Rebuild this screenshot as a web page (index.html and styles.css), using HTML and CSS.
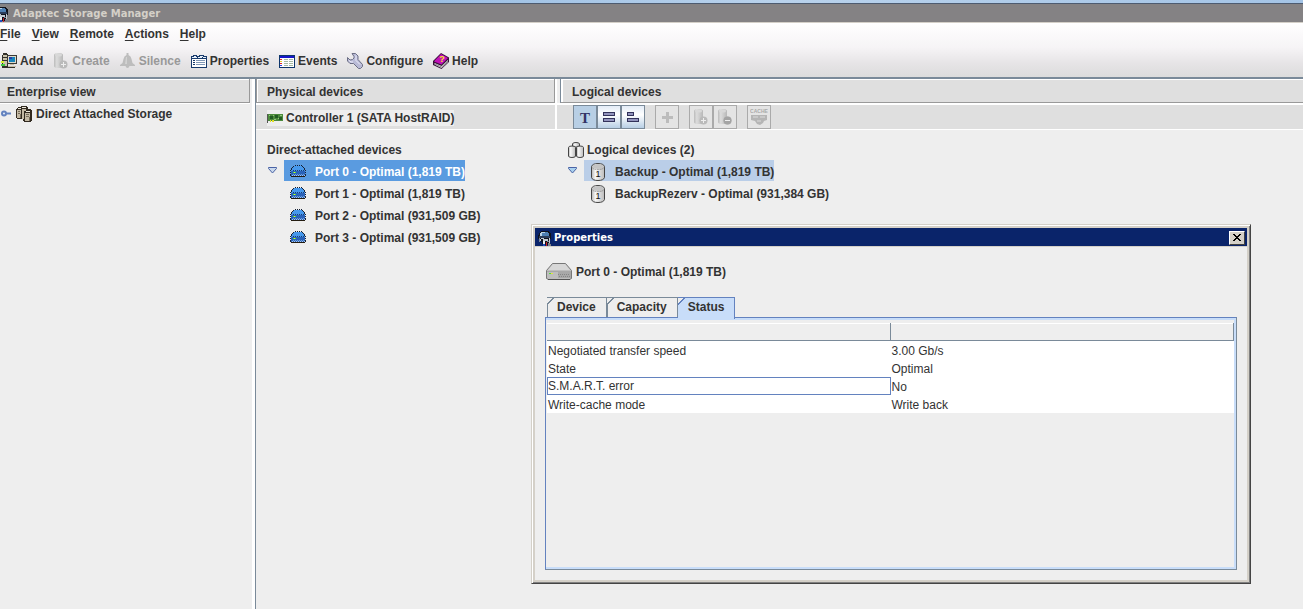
FILE: index.html
```
<!DOCTYPE html>
<html lang="en">
<head>
    <meta charset="UTF-8">
    <meta name="viewport" content="width=device-width, initial-scale=1.0">
    <title>Adaptec Storage Manager</title>
    <link rel="stylesheet" href="styles.css">
</head>
<body>
    <svg class="sprite" aria-hidden="true">
        <defs>
            <linearGradient id="steel" x1="0" x2="1" y1="0" y2="0">
                <stop offset="0" stop-color="#b5b5b5"/>
                <stop offset=".3" stop-color="#f8f8f8"/>
                <stop offset="1" stop-color="#bbb"/>
            </linearGradient>
            <linearGradient id="grayed" x1="0" x2="1" y1="0" y2="0">
                <stop offset="0" stop-color="#bbb"/>
                <stop offset=".3" stop-color="#dcdcdc"/>
                <stop offset="1" stop-color="#b8b8b8"/>
            </linearGradient>
        </defs>
        <symbol id="app" viewBox="0 0 16 16">
            <path fill="#10131c" d="M4 1h7l3 2v5l-1 1v6H6L5 12 2 10 1 7l1-4z"/>
            <path fill="#4d7fb3" d="M4 2h7l1 2v2H3V3z"/>
            <path fill="#b9d2e6" d="M4 2h4v1H4zM3 3h2v3H3z"/>
            <path fill="#2b3d5a" d="M2 6h11v2H2z"/>
            <path fill="#c3cbd4" d="M4 8h3v1H4zM6 9h5v2H6zM3 9h1v2H3zM12 8h1v5h-1z"/>
            <path fill="#e9edf0" d="M6 11h2v3H6z"/>
            <path fill="#7d8796" d="M2 8h1v4H2zM10 11h2v1h-2z"/>
            <path fill="#c8202c" d="M9 12h1v4H9z"/>
            <path fill="#214ec2" d="M6 14h2v2H6z"/>
            <path fill="#80848d" d="M11 13h2v1h1v2h-3z"/>
        </symbol>
        <symbol id="drive" viewBox="0 0 16 13">
            <path fill="#4698ec" d="M4 1h8v1h1v1h1v2h1v1H1V5h1V3h1V2h1z"/>
            <path fill="#2a62b8" d="M1 6h14v5H1z"/>
            <path fill="#111c30" d="M5 0h1v1H5zM7 0h1v1H7zM9 0h1v1H9zM11 0h1v1h-1z"/>
            <path fill="#1d3c70" d="M3 5h1v1H3zM5 5h1v1H5zM7 5h1v1H7zM9 5h1v1H9zM11 5h1v1h-1zM13 5h1v1h-1z"/>
            <path fill="#1b2436" d="M3 1h1v1H3zM2 2h1v1H2zM1 3h1v2H1zM12 1h1v1h-1zM13 2h1v1h-1zM14 3h1v2h-1zM0 5h1v1H0zM0 7h1v1H0zM0 9h1v2H0zM15 5h1v1h-1zM15 7h1v1h-1zM15 9h1v2h-1z"/>
            <path fill="#241c10" d="M1 11h14v1H1z"/>
            <path fill="#a8c8ee" d="M2 10h1v1H2zM4 10h1v1H4zM6 10h1v1H6zM8 10h1v1H8zM10 10h1v1h-1zM12 10h1v1h-1zM14 10h1v1h-1z"/>
            <path fill="#6f9fdc" d="M3 9h1v1H3zM5 9h1v1H5zM7 9h1v1H7zM9 9h1v1H9zM11 9h1v1h-1zM13 9h1v1h-1z"/>
            <path fill="#47e840" d="M3 7h3v1H3z"/>
            <path fill="#f5ef25" d="M4 7h1v1H4z"/>
        </symbol>
        <symbol id="volume" viewBox="0 0 16 18">
            <path fill="url(#steel)" stroke="#444" d="M1.500 3.500Q2.500.5 8 .5t6.500 3v11Q13.500 17.500 8 17.500t-6.500-3z"/>
            <ellipse cx="8" cy="3.500" rx="5.500" ry="2.500" fill="#c4c4c4"/>
            <path fill="none" stroke="#777" stroke-dasharray="1 1" d="M2 4.500Q3 6.500 8 6.500t6-2"/>
        </symbol>
        <symbol id="cylinder-off" viewBox="0 0 16 16">
            <path fill="url(#grayed)" d="M1 2q0-2 4.500-2T10 2v11q0 2-4.500 2T1 13z"/>
            <ellipse cx="5.500" cy="2" rx="3.500" ry="1.500" fill="#d8d8d8"/>
            <circle cx="10.500" cy="11.500" r="4" fill="#bababa"/>
        </symbol>
    </svg>

    <div class="desktop-edge"></div>
    <header class="title-bar">
        <svg class="title-icon"><use href="#app"/></svg>
        <span>Adaptec Storage Manager</span>
    </header>

    <div class="top-bars">
        <nav class="menu-bar">
            <button class="menu"><u>F</u>ile</button>
            <button class="menu"><u>V</u>iew</button>
            <button class="menu"><u>R</u>emote</button>
            <button class="menu"><u>A</u>ctions</button>
            <button class="menu"><u>H</u>elp</button>
        </nav>
        <div class="tool-bar">
            <button class="tool">
                <svg class="icon" viewBox="0 0 16 16">
                    <path fill="#33302a" d="M2 0h4v1h1v13h7v1H1V2h1z"/>
                    <path fill="#c9c3ae" d="M2 2h4v2H2zM2 5h4v2H2zM2 8h4v5H2z"/>
                    <path fill="#d7f02b" d="M0 8h3v2H0z"/>
                    <path fill="#42c943" d="M0 11h4v2H0z"/>
                    <path fill="#3b3a36" d="M6 2h10v9H6z"/>
                    <path fill="#ddd9ca" d="M7 3h8v7H7z"/>
                    <path fill="#1583bc" d="M8 4h6v5H8z"/>
                    <path fill="#263ca6" d="M8 4h3v2H8z"/>
                    <path fill="#c6bda5" d="M9 11h4v1H9zM7 13h8v1H7z"/>
                </svg>
                Add
            </button>
            <button class="tool" disabled>
                <svg class="icon smooth"><use href="#cylinder-off"/><path fill="#eee" d="M10 9h1v2h2v1h-2v2h-1v-2H8v-1h2z"/></svg>
                Create
            </button>
            <button class="tool" disabled>
                <svg class="icon smooth" viewBox="0 0 16 16"><path fill="#bdbdbd" d="M6.500 0h2v2q2.500 1 3 4l1 4 2.500 2v1H9.500q-.5 2-2 2t-2-2H0v-1l2.500-2 1-4q.5-3 3-4z"/><path fill="#d2d2d2" d="M6 4h1v7H5z"/></svg>
                Silence
            </button>
            <button class="tool">
                <svg class="icon" viewBox="0 0 16 16">
                    <path fill="#183a6c" d="M0 3h2V2h4v1h2V2h5v1h3v12H0z"/>
                    <path fill="#fff" d="M1 6h14v8H1z"/>
                    <path fill="#e8f0fa" d="M1 4h5v1H1zM7 4h4v1H7zM12 4h3v1h-3zM3 3h2v1H3zM9 3h3v1H9z"/>
                    <path stroke="#8198b7" d="M5 7.500h9M5 9.500h9M5 11.500h9"/>
                    <path stroke="#183a6c" d="M2 7.500h2M2 9.500h2M2 11.500h2"/>
                </svg>
                Properties
            </button>
            <button class="tool">
                <svg class="icon" viewBox="0 0 16 16">
                    <path fill="#0e356b" d="M0 2h16v13H0z"/>
                    <path fill="#fff" d="M1 5h14v9H1z"/>
                    <path fill="#1715c9" d="M1 3h14v2H1z"/>
                    <path stroke="#a6b9a3" d="M5 6.500h4M10 6.500h4M5 8.500h4M10 8.500h4M5 10.500h4M10 10.500h4M5 12.500h4M10 12.500h4"/>
                    <path fill="#e12929" d="M1 6h2v1H1zM1 10h2v1H1z"/>
                    <path fill="#ebc528" d="M1 8h2v1H1z"/>
                    <path fill="#333ce0" d="M1 12h2v1H1z"/>
                </svg>
                Events
            </button>
            <button class="tool">
                <svg class="icon smooth" viewBox="0 0 16 16">
                    <path fill="#b9bad6" stroke="#6c6e85" d="M5 .5h3.500l2.500 2.500v3.500l4.500 5v2l-2 2h-2L6.500 10.500H3L.5 8V4.500L3 7l2.500-.5L7 5V3.500z"/>
                    <path fill="none" stroke="#ededfb" d="M9 2.500v5l4 4M2 7.500l2 1.500h2"/>
                </svg>
                Configure
            </button>
            <button class="tool">
                <svg class="icon smooth" viewBox="0 0 16 16">
                    <path fill="#381239" d="M8 0l8 4.500V9l-7.500 7L0 12V8z"/>
                    <path fill="#c211b9" d="M8 1l7 4-6.500 6.500L1 8.500z"/>
                    <path fill="#eee" d="M1.500 10l7 3L15 7v2l-6.500 6-7-3.500z"/>
                    <path fill="none" stroke="#888" d="M2 11l6.500 3L15 8"/>
                    <text class="book-mark" x="9" y="9" text-anchor="middle">?</text>
                </svg>
                Help
            </button>
        </div>
    </div>

    <main class="panes">
        <section class="pane enterprise">
            <h2 class="pane-title">Enterprise view</h2>
            <div class="root-row">
                <svg class="key smooth" viewBox="0 0 11 7"><circle cx="3" cy="3.500" r="2" fill="#e4edf8" stroke="#6382bf" stroke-width="2"/><path stroke="#6382bf" stroke-width="2" d="M5 3.500h5"/></svg>
                <svg class="icon" viewBox="0 0 16 16">
                    <path fill="#322a20" d="M2 1h3V0h6v1h1v2h3v1h1v11h-1v1H8v-1H7v-2H1v-1H0V3h1V2h1z"/>
                    <path fill="#c3b9a4" d="M1 4h4v8H1zM6 3h4v2H8v8H6zM9 7h5v8H9z"/>
                    <path fill="#eee9dc" d="M2 2h3v1H2zM6 1h4v1H6zM10 5h4v1h-4z"/>
                    <path fill="#776d5b" d="M2 5h2v1H2zM2 7h2v1H2zM10 8h3v1h-3zM10 10h3v1h-3zM4 8h1v4H4zM13 11h1v4h-1z"/>
                </svg>
                <span>Direct Attached Storage</span>
            </div>
        </section>

        <section class="pane physical">
            <h2 class="pane-title">Physical devices</h2>
            <div class="sub-bar">
                <span class="controller">
                    <svg class="card" viewBox="0 0 16 10">
                        <path fill="#555" d="M0 1h1v9H0z"/>
                        <path fill="#4c8a3c" d="M1 1h15v7H1z"/>
                        <path fill="#235d24" d="M3 3h3v3H3zM8 2h3v3H8zM12 4h3v3h-3z"/>
                        <path fill="#91c97c" d="M6 2h1v1H6zM11 5h1v1h-1zM7 6h2v1H7zM2 2h1v1H2zM13 2h2v1h-2z"/>
                        <path fill="#e4df22" d="M3 7h1v2H3zM5 7h2v2H5z"/>
                    </svg>
                    Controller 1 (SATA HostRAID)
                </span>
            </div>
            <div class="tree">
                <div class="tree-head">Direct-attached devices</div>
                <div class="tree-row">
                    <svg class="arrow smooth" viewBox="0 0 9 7"><path fill="#c9d8ec" stroke="#4a63a5" d="M.5.5h8v1L4.500 6 .5 1.500z"/></svg>
                    <span class="node selected"><svg class="drive"><use href="#drive"/></svg>Port 0 - Optimal (1,819 TB)</span>
                </div>
                <div class="tree-row"><span class="node"><svg class="drive"><use href="#drive"/></svg>Port 1 - Optimal (1,819 TB)</span></div>
                <div class="tree-row"><span class="node"><svg class="drive"><use href="#drive"/></svg>Port 2 - Optimal (931,509 GB)</span></div>
                <div class="tree-row"><span class="node"><svg class="drive"><use href="#drive"/></svg>Port 3 - Optimal (931,509 GB)</span></div>
            </div>
        </section>

        <section class="pane logical">
            <h2 class="pane-title">Logical devices</h2>
            <div class="sub-bar view-bar">
                <div class="group">
                    <button class="view-button active" aria-label="Text view"><span class="letter">T</span></button>
                    <button class="view-button" aria-label="Full size view"><svg class="icon" viewBox="0 0 16 16"><path fill="#33335b" d="M2 3h12v4H2zM2 9h12v4H2z"/><path fill="#9294bd" d="M3 4h10v2H3zM3 10h10v2H3z"/></svg></button>
                    <button class="view-button" aria-label="Relative size view"><svg class="icon" viewBox="0 0 16 16"><path fill="#33335b" d="M2 3h7v4H2zM2 9h12v4H2z"/><path fill="#9294bd" d="M3 4h5v2H3zM3 10h10v2H3z"/></svg></button>
                </div>
                <div class="group">
                    <button class="view-button" disabled aria-label="Create"><svg class="icon" viewBox="0 0 16 16"><path fill="#bcbcbc" d="M7 3h3v4h4v3h-4v4H7v-4H3V7h4z"/></svg></button>
                </div>
                <div class="group">
                    <button class="view-button" disabled aria-label="Expand"><svg class="icon smooth"><use href="#cylinder-off"/><path fill="#eee" d="M10 9h1v2h2v1h-2v2h-1v-2H8v-1h2z"/></svg></button>
                    <button class="view-button" disabled aria-label="Delete"><svg class="icon smooth"><use href="#cylinder-off"/><circle cx="10.500" cy="11.500" r="4" fill="#a4a4a4"/><path fill="#eee" d="M8 11h5v1H8z"/></svg></button>
                </div>
                <div class="group">
                    <button class="view-button" disabled aria-label="Cache">
                        <svg class="cache smooth" viewBox="0 0 18 18">
                            <text class="cache-text" x="9" y="5" text-anchor="middle">CACHE</text>
                            <path fill="#b5b5b5" d="M1 7h16v5l-3 1-1 2-3 2-3-1-2-3-4-1z"/>
                            <path fill="#c8c8c8" d="M3 8h5v2H3zM10 8h5v2h-5zM7 12h4v2H7z"/>
                        </svg>
                    </button>
                </div>
            </div>
            <div class="tree">
                <div class="tree-head">
                    <svg class="icon smooth" viewBox="0 0 16 16">
                        <path fill="url(#steel)" stroke="#444" d="M4.500 5V2q0-1.500 3.500-1.500T11.500 2v3z"/>
                        <path fill="url(#steel)" stroke="#444" d="M.5 5.500q0-1.500 3.500-1.500t3.500 1.500V14q0 1.500-3.500 1.500T.5 14z"/>
                        <path fill="url(#steel)" stroke="#444" d="M8.500 5.500q0-1.500 3.500-1.500t3.500 1.500V14q0 1.500-3.500 1.500T8.500 14z"/>
                    </svg>
                    Logical devices (2)
                </div>
                <div class="tree-row">
                    <svg class="arrow smooth" viewBox="0 0 9 7"><path fill="#a9d0ee" stroke="#4a63a5" d="M.5.5h8v1L4.500 6 .5 1.500z"/></svg>
                    <span class="node highlighted"><svg class="volume smooth"><use href="#volume"/><text class="volume-digit" x="8" y="14" text-anchor="middle">1</text></svg>Backup - Optimal (1,819 TB)</span>
                </div>
                <div class="tree-row"><span class="node"><svg class="volume smooth"><use href="#volume"/><text class="volume-digit" x="8" y="14" text-anchor="middle">1</text></svg>BackupRezerv - Optimal (931,384 GB)</span></div>
            </div>
        </section>
    </main>

    <div class="dialog" role="dialog" aria-labelledby="dialogTitle">
        <div class="dialog-bar">
            <svg class="title-icon"><use href="#app"/></svg>
            <span id="dialogTitle">Properties</span>
            <button class="close" aria-label="Close"><svg class="cross" viewBox="0 0 8 7"><path fill="#000" d="M0 0h2v1h1v1h2V1h1V0h2v1H7v1H6v1H5v1h1v1h1v1h1v1H6V6H5V5H3v1H2v1H0V6h1V5h1V4h1V3H2V2H1V1H0z"/></svg></button>
        </div>
        <div class="dialog-body">
            <div class="device-name">
                <svg class="device-icon smooth" viewBox="0 0 26 18">
                    <path fill="#bebebe" stroke="#777" d="M.5 7.500l6-7h13l6 7v8l-2 1H2.500l-2-1z"/>
                    <path fill="#d7d7d7" d="M7 1h12l5 6H2z"/>
                    <path fill="#a8a8a8" d="M1 8h24v1H1zM12 9h13v6H12z"/>
                    <path stroke="#868686" stroke-dasharray="1 1" d="M12 11.500h12M13 13.500h12"/>
                    <path fill="#555" d="M2 16h22v1H2z"/>
                    <path fill="#4adb3c" d="M3 10h4v1H3z"/>
                    <path fill="#e5e43c" d="M5 10h2v1H5z"/>
                </svg>
                Port 0 - Optimal (1,819 TB)
            </div>
            <div class="tabs" role="tablist">
                <button class="tab" role="tab">Device</button>
                <button class="tab" role="tab">Capacity</button>
                <button class="tab current" role="tab" aria-selected="true">Status</button>
            </div>
            <div class="tab-panel" role="tabpanel">
                <table class="status">
                    <thead>
                        <tr><th></th><th></th></tr>
                    </thead>
                    <tbody>
                        <tr><td>Negotiated transfer speed</td><td>3.00 Gb/s</td></tr>
                        <tr><td>State</td><td>Optimal</td></tr>
                        <tr><td class="focused">S.M.A.R.T. error</td><td>No</td></tr>
                        <tr><td>Write-cache mode</td><td>Write back</td></tr>
                    </tbody>
                </table>
            </div>
        </div>
    </div>
</body>
</html>
```
FILE: styles.css
```
* {
    box-sizing: border-box;
}
body {
    margin: 0;
    min-height: 100vh;
    display: flex;
    flex-direction: column;
    background-color: #eee;
    color: #333;
    font: bold 12px/16px "Liberation Sans", Arial, sans-serif;
    white-space: nowrap;
    overflow: hidden;
}
button {
    font: inherit;
    color: inherit;
    background: none;
    border: none;
    padding: 0;
}
svg {
    display: block;
    flex: none;
    shape-rendering: crispEdges;
}
.smooth {
    shape-rendering: auto;
}
.sprite {
    position: absolute;
    width: 0;
    height: 0;
    shape-rendering: inherit;
}
.icon {
    width: 16px;
    height: 16px;
}
.desktop-edge {
    height: 4px;
    background: linear-gradient(90deg, #b5cfea, #98bde3 30%, #b9d2ec 60%, #a4c4e6);
    border-bottom: 1px solid #4d5b70;
}
.title-bar {
    display: flex;
    align-items: center;
    height: 19px;
    padding-top: 1px;
    background-color: #848284;
    border-bottom: 1px solid #d4d0c8;
    color: #d4d0c8;
    font: bold 10px/16px "DejaVu Sans", sans-serif;
}
.title-icon {
    width: 16px;
    height: 16px;
}
.title-bar .title-icon {
    margin-left: -6px;
    margin-right: 3px;
}
.top-bars {
    background: linear-gradient(#fff, #f6f4f6 45%, #e6e4e6 75%, #dcdcdc);
    border-bottom: 2px solid #7a8a99;
}
.menu-bar {
    display: flex;
    gap: 11px;
    padding-top: 2px;
    height: 22px;
}
.menu {
    height: 18px;
}
.menu u {
    text-underline-offset: 2px;
}
.tool-bar {
    display: flex;
    gap: 10px;
    padding: 8px 1px 0;
    height: 32px;
}
.tool {
    display: flex;
    align-items: center;
    gap: 3px;
    height: 16px;
}
.tool:disabled {
    color: #999;
}
.book-mark {
    font: bold 9px "Liberation Sans", Arial, sans-serif;
    fill: #f8ed28;
}
.panes {
    flex: 1;
    display: grid;
    grid-template-columns: 255px 305px 1fr;
}
.pane-title {
    margin: 0;
    height: 24px;
    padding: 5px 7px 0;
    font-size: 12px;
    line-height: 16px;
    background-color: #dfdfdf;
    border: 1px solid #999;
    border-width: 0 1px 1px 0;
    box-shadow: inset 0 1px #fff;
}
.enterprise {
    border-right: 3px solid #fff;
    padding-right: 2px;
}
.root-row {
    display: flex;
    align-items: center;
    gap: 4px;
    height: 20px;
    padding-left: 1px;
    border-top: 1px solid #fff;
}
.key {
    width: 11px;
    height: 7px;
}
.physical {
    border-left: 1px solid #7a8a99;
}
.physical .pane-title {
    border-left: 1px solid #999;
    padding-left: 10px;
    margin-right: 5px;
    box-shadow: inset 1px 1px #fff, 2px 0 #fff;
}
.logical .pane-title {
    border-left: 1px solid #7a8a99;
    padding-left: 11px;
    border-right: none;
    box-shadow: inset 2px 1px #fff;
}
.sub-bar {
    display: flex;
    align-items: center;
    height: 27px;
    background-color: #dfdfdf;
    border-top: 2px solid #fff;
    border-bottom: 1px solid #fff;
}
.physical .sub-bar {
    padding-top: 1px;
    padding-left: 11px;
    margin-right: 3px;
    border-right: 2px solid #fff;
}
.controller {
    display: flex;
    align-items: center;
    gap: 3px;
    height: 16px;
    background-color: #eee;
}
.card {
    width: 16px;
    height: 10px;
}
.view-bar {
    gap: 10px;
    padding-left: 16px;
    margin-left: -3px;
}
.group {
    display: flex;
}
.view-button {
    display: flex;
    align-items: center;
    justify-content: center;
    width: 24px;
    height: 24px;
    border: 1px solid #7a8a99;
    background: linear-gradient(#e3ecf7, #fff 40%, #b8cfe5);
}
.view-button.active {
    background: #b8cfe5;
}
.view-button:disabled {
    background: #e4e4e4;
    border-color: #aaa;
}
.letter {
    padding-top: 2px;
    font: bold 15px/16px "Liberation Serif", serif;
    color: #333366;
}
.cache {
    width: 18px;
    height: 18px;
}
.cache-text {
    font: bold 5px "Liberation Sans", Arial, sans-serif;
    fill: #aaa;
}
.tree {
    padding: 8px 0 0 8px;
}
.tree-head {
    display: flex;
    align-items: center;
    gap: 3px;
    height: 22px;
    padding-top: 1px;
}
.physical .tree-head {
    padding-left: 3px;
}
.tree-row {
    display: flex;
    height: 22px;
    padding-left: 16px;
}
.physical .tree-row {
    padding-left: 20px;
}
.arrow {
    width: 9px;
    height: 7px;
    margin: 7px 7px 0 -16px;
}
.node {
    display: flex;
    align-items: center;
    gap: 9px;
    height: 21px;
    padding: 2px 0 0 6px;
}
.selected {
    background-color: #5a9be0;
    color: #fff;
}
.highlighted {
    background-color: #bacee8;
}
.drive {
    width: 16px;
    height: 13px;
}
.volume {
    width: 16px;
    height: 18px;
}
.volume-digit {
    font: 9px "Liberation Sans", Arial, sans-serif;
    fill: #111;
}
/* Properties window floats over the panes */
.dialog {
    position: absolute;
    left: 531px;
    right: 52px;
    top: 224px;
    background-color: #eee;
    border: 1px solid #d4d0c8;
    border-right-color: #444;
    border-bottom-color: #444;
    box-shadow: inset 1px 1px #fff, inset -1px -1px #808080, inset 3px 3px #d4d0c8, inset -3px -3px #d4d0c8;
    padding: 3px;
}
.dialog-bar {
    display: flex;
    align-items: center;
    gap: 1px;
    height: 19px;
    padding: 1px 2px 0;
    background-color: #0a246a;
    border-bottom: 1px solid #d4d0c8;
    color: #fff;
    font: bold 10px/16px "DejaVu Sans", sans-serif;
}
.close {
    display: flex;
    align-items: center;
    justify-content: center;
    width: 16px;
    height: 14px;
    margin-left: auto;
    background-color: #d4d0c8;
    border: 1px solid #fff;
    border-right-color: #404040;
    border-bottom-color: #404040;
}
.cross {
    width: 8px;
    height: 7px;
}
.dialog-body {
    padding: 15px 10px 10px;
}
.device-name {
    display: flex;
    align-items: center;
    gap: 4px;
    padding-left: 1px;
    height: 20px;
}
.device-icon {
    width: 26px;
    height: 18px;
}
.tabs {
    display: flex;
    height: 20px;
    margin-top: 15px;
    padding-left: 2px;
}
.tab {
    padding: 0 10px 2px;
    border: 1px solid #7a8a99;
    border-width: 1px 1px 0 0;
    /* cut corner on the left */
    background: linear-gradient(135deg, #eee 4px, #7a8a99 4px, #7a8a99 5px, transparent 5px), linear-gradient(#7a8a99, #7a8a99) 0 6px / 1px 100% no-repeat;
}
.tab.current {
    height: 22px;
    padding-bottom: 4px;
    border-color: #6382bf;
    background: linear-gradient(135deg, #eee 4px, #6382bf 4px, #6382bf 5px, #c8ddf9 5px);
    z-index: 1;
}
.tab-panel {
    height: 253px;
    padding: 5px 2px 0 1px;
    border: 1px solid #6382bf;
    border-right-color: #7a8a99;
    border-bottom-color: #7a8a99;
    box-shadow: inset 0 2px #c8ddf9, inset -2px -2px #c8ddf9;
}
.status {
    width: 100%;
    table-layout: fixed;
    border-collapse: separate;
    border-spacing: 0;
    font-weight: normal;
    background-color: #fff;
}
.status th {
    height: 18px;
    padding: 0;
    background-color: #eee;
    border: 1px solid #7a8a99;
    border-width: 0 1px 1px 0;
    box-shadow: inset 0 1px #fff;
}
.status td {
    height: 18px;
    padding: 2px 1px 0;
    line-height: 16px;
}
.status .focused {
    border: 1px solid #6382bf;
    padding: 1px 0 0;
    line-height: 15px;
}
```
